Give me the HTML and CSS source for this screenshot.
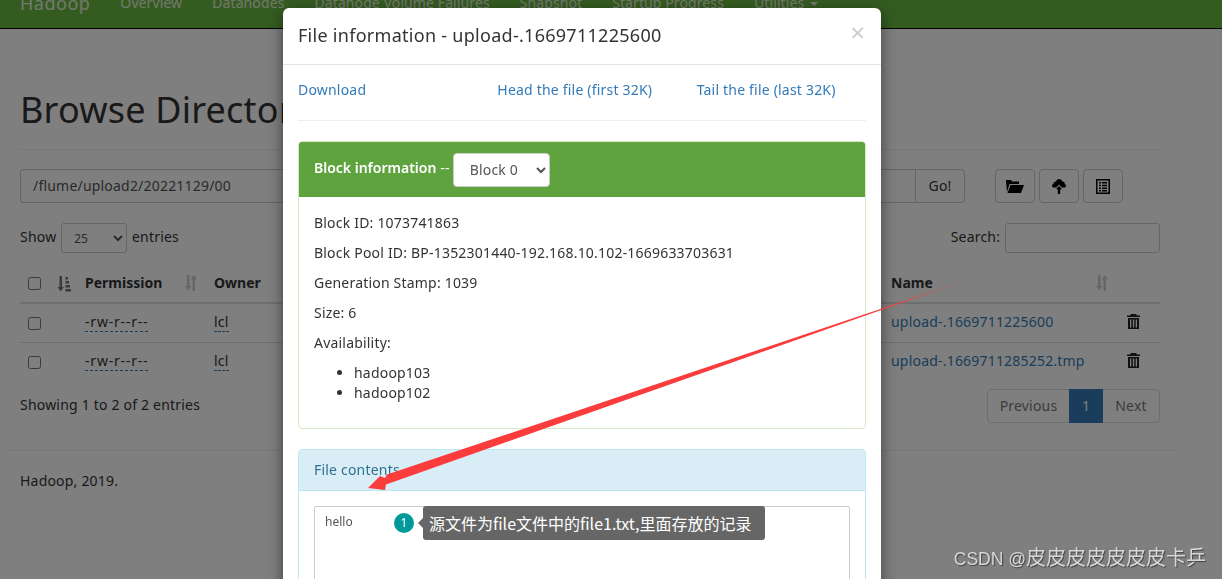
FILE: index.html
```html
<!DOCTYPE html>
<html lang="en">
<head>
    <meta charset="UTF-8">
    <title>Browsing HDFS</title>
    <link rel="stylesheet" href="styles.css">
</head>
<body>
    <nav class="navbar">
        <a class="brand">Hadoop</a>
        <a>Overview</a>
        <a>Datanodes</a>
        <a>Datanode Volume Failures</a>
        <a>Snapshot</a>
        <a>Startup Progress</a>
        <a>Utilities <span class="caret"></span></a>
    </nav>

    <div class="container">
        <h1 class="page-header">Browse Directory</h1>

        <div class="path-row">
            <input class="path-input" type="text" value="/flume/upload2/20221129/00">
            <button class="btn btn-go">Go!</button>
            <div class="tool-buttons">
                <button class="btn btn-icon">
                    <svg width="18" height="14" viewBox="0 0 18 14"><path d="M1 13 0 2V1h5l1 1.500h7V5H3.500L1 13zM4.500 6H18l-3 8H1.500z"/></svg>
                </button>
                <button class="btn btn-icon">
                    <svg width="14" height="15" viewBox="0 0 14 15"><path d="M7 0c1.700 0 3 1.100 3.300 2.600.2 0 .3-.1.500-.1 1.100 0 1.900.8 1.900 1.900 0 .2 0 .4-.1.600.8.200 1.400.9 1.400 1.700 0 1-.8 1.800-1.800 1.800H9.700L7 5.500 4.300 8.500H1.800C.8 8.500 0 7.700 0 6.700c0-.9.600-1.600 1.400-1.800C1.600 3.400 2.800 2.400 4 2.500 4.500 1 5.600 0 7 0zM7 7l3 3.300H8.200V15H5.800v-4.700H4z"/></svg>
                </button>
                <button class="btn btn-icon">
                    <svg width="14" height="15" viewBox="0 0 14 15"><path fill-rule="evenodd" d="M0 0h14v15H0zM1.500 1.500v12h11v-12zM3 3h2v1.500H3zM6 3h5v1.500H6zM3 5.700h2v1.500H3zM6 5.700h5v1.500H6zM3 8.400h2v1.500H3zM6 8.400h5v1.500H6zM3 11h2v1.500H3zM6 11h5v1.500H6z"/></svg>
                </button>
            </div>
        </div>

        <div class="table-tools">
            <label>Show
                <select class="len-select"><option>25</option></select>
                entries</label>
            <label class="search">Search: <input type="text"></label>
        </div>

        <table class="files">
            <colgroup>
                <col class="col-check">
                <col class="col-perm">
                <col class="col-owner">
                <col class="col-rest">
                <col class="col-name">
                <col class="col-del">
            </colgroup>
            <thead>
                <tr>
                    <th class="check-cell">
                        <input type="checkbox">
                        <svg class="sort-by" width="14" height="16" viewBox="0 0 14 16"><path d="M2.500 0h2.500v11h2l-3.300 4.500L.5 11h2zM8.500 1H11v2.500H8.500zM8.500 5H12v2.500H8.500zM8.500 9H13v2.500H8.500zM8.500 13H14v2.500H8.500z"/></svg>
                    </th>
                    <th>Permission
                        <svg class="sort-off sort-perm" width="14" height="16" viewBox="0 0 14 16"><path d="M3 0h2.500v11h2L4.200 15.500 1 11h2zM8.500 4.500h-2L9.800 0 13 4.500h-2V16H8.500z"/></svg>
                    </th>
                    <th>Owner</th>
                    <th></th>
                    <th>Name
                        <svg class="sort-off sort-name" width="14" height="16" viewBox="0 0 14 16"><path d="M3 0h2.500v11h2L4.200 15.500 1 11h2zM8.500 4.500h-2L9.800 0 13 4.500h-2V16H8.500z"/></svg>
                    </th>
                    <th></th>
                </tr>
            </thead>
            <tbody>
                <tr>
                    <td><input type="checkbox"></td>
                    <td><span class="dotted perm">-rw-r--r--</span></td>
                    <td><span class="dotted">lcl</span></td>
                    <td></td>
                    <td><a class="file-link">upload-.1669711225600</a></td>
                    <td>
                        <svg class="trash" width="13" height="15" viewBox="0 0 13 15"><path fill-rule="evenodd" d="M4 0h5l1 1.500h3V3H0V1.500h3zM1 4h11v11H1zM3 5.500v8h1.300v-8zM5.900 5.500v8h1.300v-8zM8.700 5.500v8H10v-8z"/></svg>
                    </td>
                </tr>
                <tr>
                    <td><input type="checkbox"></td>
                    <td><span class="dotted perm">-rw-r--r--</span></td>
                    <td><span class="dotted">lcl</span></td>
                    <td></td>
                    <td><a class="file-link">upload-.1669711285252.tmp</a></td>
                    <td>
                        <svg class="trash" width="13" height="15" viewBox="0 0 13 15"><path fill-rule="evenodd" d="M4 0h5l1 1.500h3V3H0V1.500h3zM1 4h11v11H1zM3 5.500v8h1.300v-8zM5.900 5.500v8h1.300v-8zM8.700 5.500v8H10v-8z"/></svg>
                    </td>
                </tr>
            </tbody>
        </table>

        <div class="table-foot">
            <div class="table-info">Showing 1 to 2 of 2 entries</div>
            <div class="pagination">
                <a class="page-prev">Previous</a>
                <a class="page-cur">1</a>
                <a class="page-next">Next</a>
            </div>
        </div>

        <footer class="page-footer">Hadoop, 2019.</footer>
    </div>

    <div class="backdrop"></div>

    <div class="modal">
        <div class="modal-header">
            <h4>File information - upload-.1669711225600</h4>
            <span class="close">×</span>
        </div>
        <div class="modal-body">
            <div class="links">
                <a>Download</a>
                <a>Head the file (first 32K)</a>
                <a>Tail the file (last 32K)</a>
            </div>
            <hr>
            <div class="panel panel-success">
                <div class="panel-heading">
                    <span class="block-title"><b>Block information</b> --</span>
                    <select class="block-select"><option>Block 0</option></select>
                </div>
                <div class="panel-body">
                    <p>Block ID: 1073741863</p>
                    <p>Block Pool ID: BP-1352301440-192.168.10.102-1669633703631</p>
                    <p>Generation Stamp: 1039</p>
                    <p>Size: 6</p>
                    <p>Availability:</p>
                    <ul>
                        <li>hadoop103</li>
                        <li>hadoop102</li>
                    </ul>
                </div>
            </div>
            <div class="panel panel-info">
                <div class="panel-heading">File contents</div>
                <div class="panel-body">
                    <textarea class="contents" rows="6">hello</textarea>
                </div>
            </div>
        </div>
    </div>

    <!-- anotaciones encima de la captura -->
    <svg class="arrow" width="1222" height="579" viewBox="0 0 1222 579">
        <polygon points="958,283 387,474.500 385,478 380,476 368,488 385,490 386,484.500" fill="#fb3c3c"/>
    </svg>
    <span class="note-badge">1</span>
    <div class="note">源文件为file文件中的file1.txt,里面存放的记录</div>
    <div class="watermark"><span class="watermark-name">CSDN @</span>皮皮皮皮皮皮皮卡乒</div>
</body>
</html>
```

FILE: styles.css
```css
* {
    box-sizing: border-box;
}
html, body {
    height: 100%;
    overflow: hidden;
}
body {
    margin: 0;
    font-family: "Noto Sans", "Noto Sans CJK SC", sans-serif;
    font-size: 14px;
    line-height: 20px;
    letter-spacing: .2px;
    color: #333;
    background: #fff;
}
a {
    color: #337ab7;
}

/* navbar, cortada por arriba como en la captura */
.navbar {
    display: flex;
    align-items: flex-end;
    gap: 30px;
    height: 29px;
    padding: 0 0 15px 20px;
    overflow: hidden;
    letter-spacing: .1px;
    background: #69b842;
    border-bottom: 1px solid #000;
}
.navbar a {
    color: #e6f0dc;
    white-space: nowrap;
}
.navbar .brand {
    font-size: 18px;
    letter-spacing: .5px;
}
.caret {
    display: inline-block;
    border-top: 4px solid #e6f0dc;
    border-left: 4px solid transparent;
    border-right: 4px solid transparent;
    vertical-align: middle;
    margin-left: 2px;
}

.container {
    width: 1170px;
    margin-left: 5px;
    padding: 0 15px;
}
.page-header {
    margin: 0 0 19px;
    padding: 61px 0 19px;
    font-size: 36px;
    font-weight: 400;
    line-height: 40px;
    color: #333;
    border-bottom: 1px solid #eee;
}

.path-row {
    display: flex;
    height: 34px;
    padding-right: 37px;
}
.path-input {
    flex: 1;
    min-width: 0;
    height: 34px;
    padding: 5px 12px 7px;
    font: inherit;
    letter-spacing: inherit;
    color: #555;
    border: 1px solid #ccc;
    border-right: 0;
    border-radius: 4px 0 0 4px;
}
.btn {
    height: 34px;
    font: inherit;
    letter-spacing: inherit;
    color: #333;
    background: #fff;
    border: 1px solid #ccc;
    border-radius: 4px;
    padding: 0;
}
.btn-go {
    width: 50px;
    border-radius: 0 4px 4px 0;
}
.tool-buttons {
    display: flex;
    gap: 4px;
    margin-left: 30px;
}
.btn-icon {
    display: flex;
    align-items: center;
    justify-content: center;
    width: 40px;
}

.table-tools {
    display: flex;
    justify-content: space-between;
    align-items: center;
    margin-top: 20px;
    height: 30px;
}
.len-select {
    width: 66px;
    height: 30px;
    margin: 0 1px;
    padding: 0 8px;
    font: 12px "Noto Sans", sans-serif;
    color: #555;
    background: #fff;
    border: 1px solid #ccc;
    border-radius: 3px;
    vertical-align: middle;
}
.search input {
    width: 155px;
    height: 30px;
    margin-left: 1px;
    border: 1px solid #ccc;
    border-radius: 3px;
    vertical-align: middle;
}

.files {
    width: 100%;
    margin-top: 12px;
    table-layout: fixed;
    border-collapse: collapse;
}
.col-check { width: 57px; }
.col-perm { width: 129px; }
.col-owner { width: 80px; }
.col-name { width: 235px; }
.col-del { width: 42px; }
.files th {
    position: relative;
    height: 38px;
    padding: 7px 8px 9px;
    text-align: left;
    font-weight: 700;
    letter-spacing: 0;
    border-bottom: 2px solid #ddd;
}
.files td {
    height: 39px;
    padding: 7px 8px 9px;
    border-bottom: 1px solid #ddd;
}
.files tbody tr:last-child td {
    border-bottom: 0;
}
.files input[type="checkbox"] {
    width: 13px;
    height: 13px;
    margin: 0;
    vertical-align: middle;
}
.check-cell {
    white-space: nowrap;
}
.sort-by {
    margin-left: 12px;
    vertical-align: middle;
    fill: #777;
}
.sort-off {
    position: absolute;
    top: 10px;
    fill: #ccc;
}
.sort-perm { right: 8px; }
.sort-name { right: 9px; }
.dotted {
    border-bottom: 1px dashed #337ab7;
}
.perm {
    letter-spacing: .8px;
}
.file-link {
    color: #337ab7;
}
.trash {
    display: block;
    margin: -1px 0 0 1px;
    fill: #222;
}

.table-foot {
    display: flex;
    justify-content: space-between;
    margin-top: 8px;
    height: 34px;
    align-items: center;
}
.table-info {
    padding-bottom: 2px;
}
.pagination {
    display: flex;
    height: 34px;
    line-height: 32px;
    color: #777;
    border: 1px solid #ddd;
    border-radius: 4px;
}
.page-prev {
    width: 81px;
    text-align: center;
    color: #777;
}
.page-cur {
    width: 34px;
    margin: -1px 0;
    line-height: 34px;
    text-align: center;
    color: #fff;
    background: #337ab7;
}
.page-next {
    width: 56px;
    text-align: center;
    color: #777;
}
.page-footer {
    margin: 27px -15px 0;
    padding: 20px 15px;
    border-top: 1px solid #eee;
}

.backdrop {
    position: fixed;
    inset: 0;
    background: rgba(0, 0, 0, .5);
}
.modal {
    position: absolute;
    left: 283px;
    top: 8px;
    width: 598px;
    background: #fff;
    border-radius: 6px;
    box-shadow: 0 5px 15px rgba(0, 0, 0, .5);
}
.modal-header {
    display: flex;
    justify-content: space-between;
    align-items: flex-start;
    height: 57px;
    padding: 14px 15px 0;
    border-bottom: 1px solid #e5e5e5;
}
.modal-header h4 {
    margin: 0;
    font-size: 18px;
    font-weight: 400;
    line-height: 26px;
    letter-spacing: .28px;
}
.close {
    margin-right: 1px;
    font-size: 26px;
    line-height: 21px;
    letter-spacing: 0;
    color: #ccc;
}
.modal-body {
    padding: 15px;
}
.links {
    display: grid;
    grid-template-columns: repeat(3, 1fr);
    margin: 0 -15px;
}
.links a {
    padding: 0 15px;
}
.modal-body hr {
    margin: 20px 0;
    border: 0;
    border-top: 1px solid #eee;
}
.panel {
    margin-bottom: 20px;
    border: 1px solid #d6e9c6;
    border-radius: 4px;
    background: #fff;
}
.panel-heading {
    padding: 10px 15px;
    border-radius: 3px 3px 0 0;
}
.panel-success .panel-heading {
    display: flex;
    align-items: center;
    gap: 3px;
    height: 55px;
    color: #fff;
    background: #5fa33e;
}
.block-title {
    padding-bottom: 3px;
}
.block-title b {
    font-weight: 600;
    letter-spacing: 0;
}
.block-select {
    width: 97px;
    height: 34px;
    padding: 0 12px;
    font: inherit;
    letter-spacing: inherit;
    color: #555;
    background: #fff;
    border: 1px solid #ccc;
    border-radius: 4px;
}
.panel-info {
    border-color: #bce8f1;
}
.panel-info .panel-heading {
    color: #31708f;
    background: #d9edf7;
    border-bottom: 1px solid #bce8f1;
}
.panel-body {
    padding: 15px;
}
.panel-success .panel-body {
    padding-top: 16px;
}
.panel-body p {
    margin: 0 0 10px;
}
.panel-body ul {
    margin: 0 0 10px;
    padding-left: 40px;
}
.contents {
    display: block;
    width: 100%;
    padding: 5px 10px;
    font: 12px/20px "Noto Sans", sans-serif;
    color: #555;
    border: 1px solid #ccc;
    border-radius: 2px;
    resize: none;
}

.arrow {
    position: absolute;
    left: 0;
    top: 0;
}
.note-badge {
    position: absolute;
    left: 394px;
    top: 513px;
    width: 20px;
    height: 20px;
    border-radius: 50%;
    font-size: 12px;
    line-height: 20px;
    text-align: center;
    color: #fff;
    background: #009a9a;
}
.note {
    position: absolute;
    left: 423px;
    top: 506px;
    width: 342px;
    height: 34px;
    padding: 0 6px;
    font-family: "Noto Sans CJK SC", "Noto Sans", sans-serif;
    font-size: 16px;
    line-height: 34px;
    letter-spacing: 0;
    white-space: nowrap;
    color: #fff;
    background: #666;
    border-radius: 3px;
}
.note::before {
    content: "";
    position: absolute;
    left: -5px;
    top: 12px;
    border-top: 5px solid transparent;
    border-bottom: 5px solid transparent;
    border-right: 5px solid #666;
}
.watermark {
    position: absolute;
    right: 16px;
    bottom: 7px;
    font-family: "Liberation Sans", "Noto Sans CJK SC", sans-serif;
    font-size: 20px;
    line-height: 26px;
    letter-spacing: 0;
    white-space: nowrap;
    color: #d8d8d8;
    text-shadow: 1px 1px 1px #444;
}
.watermark-name {
    font-size: 17.500px;
}
```
